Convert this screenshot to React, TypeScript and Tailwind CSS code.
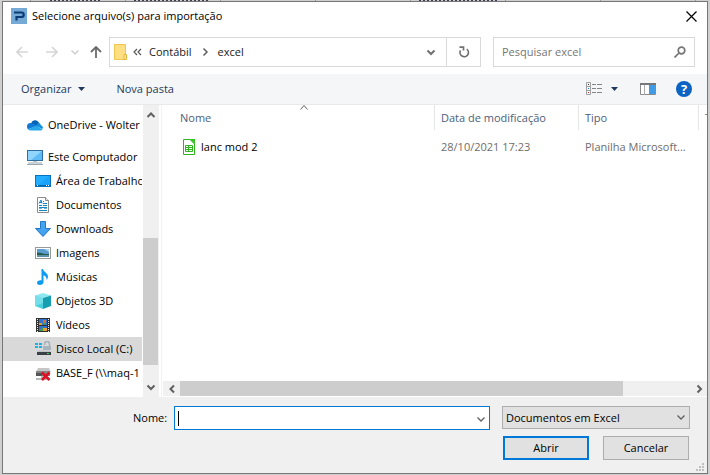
import type { ReactNode } from "react";

const TEXT = "font-['Open_Sans','Noto_Sans',sans-serif] text-[11px] leading-4";

type IconProps = { children: ReactNode };

function Icon16({ children }: IconProps) {
  return (
    <svg className="size-4 shrink-0" viewBox="0 0 16 16" aria-hidden="true">
      {children}
    </svg>
  );
}

function Chevron({ dir, color = "#606060", width = 2 }: { dir: "up" | "down" | "left" | "right"; color?: string; width?: number }) {
  const paths = {
    up: "M1.5 7 5 3.5 8.5 7",
    down: "M1.5 3.5 5 7 8.5 3.5",
    left: "M7 1.5 3.5 5 7 8.5",
    right: "M3.5 1.5 7 5 3.5 8.5",
  };
  return (
    <svg className="size-[10px] shrink-0" viewBox="0 0 10 10" fill="none" stroke={color} strokeWidth={width} aria-hidden="true">
      <path d={paths[dir]} />
    </svg>
  );
}

const icons: Record<string, ReactNode> = {
  onedrive: (
    <Icon16>
      <path d="M4 6.500a4.200 4.200 0 0 1 7.700-1.200L13 8l-6 4z" fill="#0364b8" />
      <path d="M3.600 6A3.700 3.700 0 0 0 0 9.700c0 1 .3 1.900 1 2.600L9.500 9 6 6.500A4 4 0 0 0 3.600 6z" fill="#0f78d4" />
      <path d="M9 8.800 11 6a3 3 0 0 1 3 2.300A2.900 2.900 0 0 1 16 11l-1 1z" fill="#1490df" />
      <path d="M1 12.200 9 8.600l6.500 3.800c-.5.700-1.200 1-2.300 1H3.600c-1 0-2-.4-2.600-1.200z" fill="#28a8ea" />
    </Icon16>
  ),
  computer: (
    <Icon16>
      <rect x=".5" y="1.500" width="15" height="10" fill="#5ebbf5" stroke="#2f6f9f" />
      <path d="M1 2h14L4 11H1z" fill="#8fd5fc" />
      <path d="M6 12h4v1H6z" fill="#b9c3ca" />
      <path d="M1 14h14M0 15.500h16" stroke="#98a7b1" />
    </Icon16>
  ),
  desktop: (
    <Icon16>
      <rect x=".5" y="2.500" width="15" height="11" fill="#1aa3f8" stroke="#0674bd" />
      <path d="M1 3h13L4 12H1z" fill="#22adff" />
      <path d="M1 12.500h14" stroke="#0565a8" />
      <path d="M2 12.500h1m8 0h1m1 0h1" stroke="#fff" />
    </Icon16>
  ),
  document: (
    <Icon16>
      <path d="M2.500.5h8l3 3v12h-11z" fill="#fff" stroke="#8b8b8b" />
      <path d="M10.500.5v3h3" fill="#eee" stroke="#8b8b8b" />
      <path d="M4 6.500 6 3l1 3.500M4 5.500h3M8 4.500h1M8 6.500h4M4 8.500h3M8 8.500h4M4 10.500h8M4 13.500h8" stroke="#1683c4" fill="none" />
      <path d="M4 11.500h3M9 11.500h3" stroke="#64b5e5" />
    </Icon16>
  ),
  download: (
    <Icon16>
      <path d="M5.500.5h5v7h5L8 15.500.5 7.500h5z" fill="#3797e8" stroke="#2479c6" />
      <path d="M6 1h4v7h4l-6 6-6-6h4z" fill="#45a4ef" />
    </Icon16>
  ),
  image: (
    <Icon16>
      <rect x=".5" y="2.500" width="15" height="11" fill="#fff" stroke="#999" />
      <path d="M2 4h12v8H2z" fill="#a9d5ef" />
      <path d="M2 4h7l5 3v2H2z" fill="#5a9bd0" />
      <path d="M2 7.500 6 8l4 1h4v1H2z" fill="#255d4b" />
      <path d="M2 10h12v2H2z" fill="#5c91a8" />
    </Icon16>
  ),
  music: (
    <Icon16>
      <path d="M6.500 0H8c.4 3 5 4 5 7.500 0 1.700-.8 2.800-1.500 3.500.5-3-1.500-4.300-3-4.800V13c0 1.800-1.700 3-3.600 3C3.200 16 2 15.200 2 13.800 2 12 4.200 10.800 6.500 11.300z" fill="#0f9af4" />
    </Icon16>
  ),
  cube: (
    <Icon16>
      <path d="M0 2.500 8 0l8 2.500L8 5z" fill="#8ce8f0" />
      <path d="M0 2.500 8 5v11l-8-3z" fill="#4ccfdd" />
      <path d="M16 2.500 8 5v11l8-3z" fill="#159fb0" />
      <path d="m0 2.500 8 2.500v5L0 13z" fill="#74dee9" />
    </Icon16>
  ),
  video: (
    <Icon16>
      <path d="M1 1h14v14H1z" fill="#303030" />
      <path d="M2.500 2v13M13.500 2v13" stroke="#eee" strokeDasharray="1 1" />
      <path d="M4 2h8v6H4zM4 9h8v5H4z" fill="#2f72cf" />
      <path d="M4 6h3v2H4zM8 11h4v3H8z" fill="#e9a32b" />
      <path d="M8 3h3v3H8z" fill="#df6b2c" />
      <path d="m4 14 4-4v4zM7 7l4-2v3z" fill="#4b9850" />
    </Icon16>
  ),
  drive: (
    <Icon16>
      <path d="M0 2h3v2H0zM4 2h3v2H4zM0 5h3v2H0zM4 5h3v2H4z" fill="#17b1ee" />
      <path d="M9.500 4V3A2.500 2.500 0 0 1 14.500 3v3" fill="none" stroke="#a4b1b8" strokeWidth="1.500" />
      <path d="M8 5h8v4H8z" fill="#a9b5bc" />
      <path d="M3 9.500h12l1 2H2z" fill="#bfc3c5" />
      <path d="M2 11h14v3H2z" fill="#3b4145" />
      <path d="M12 12h2v1h-2z" fill="#36db5e" />
    </Icon16>
  ),
  network: (
    <Icon16>
      <path d="M3 3h11l2 4H1z" fill="#c6c6c6" />
      <path d="M1 6h14v5H1z" fill="#858585" />
      <path d="M1 8h6v3H1z" fill="#555" />
      <path d="M6 11h3v4H6zM1 13h13v2H1z" fill="#bababa" />
      <path d="m7 7.500 7.500 7.500M14.500 7.500 7 15" stroke="#dc1020" strokeWidth="2.500" />
    </Icon16>
  ),
};

const places = [
  { name: "OneDrive - Wolter", icon: "onedrive", root: true },
  { name: "Este Computador", icon: "computer", root: true },
  { name: "Área de Trabalho", icon: "desktop" },
  { name: "Documentos", icon: "document" },
  { name: "Downloads", icon: "download" },
  { name: "Imagens", icon: "image" },
  { name: "Músicas", icon: "music" },
  { name: "Objetos 3D", icon: "cube" },
  { name: "Vídeos", icon: "video" },
  { name: "Disco Local (C:)", icon: "drive", selected: true },
  { name: "BASE_F (\\\\maq-1", icon: "network" },
];

function TitleBar() {
  return (
    <header className="flex h-7 items-center gap-[5px] pl-2 pr-[10px]">
      <svg className="size-4 shrink-0" viewBox="0 0 16 16" aria-hidden="true">
        <path d="M0 0h16v16H0z" fill="#75a9d6" />
        <path d="M3 4.500h7.500a2.200 2.200 0 0 1 0 4.500H5.500v3.500" fill="none" stroke="#0b3c78" strokeWidth="2.200" />
      </svg>
      <h1 className="flex-1 text-black">Selecione arquivo(s) para importação</h1>
      <button type="button" aria-label="Fechar" className="flex size-[11px] items-center justify-center">
        <svg className="size-[11px]" viewBox="0 0 11 11" stroke="#000" strokeWidth="1.200">
          <path d="m.5.500 10 10M10.500.500l-10 10" />
        </svg>
      </button>
    </header>
  );
}

function NavBar() {
  return (
    <nav className="flex h-[44px] items-center pl-[13px] pr-3">
      <button type="button" aria-label="Voltar">
        <svg className="h-3 w-3" viewBox="0 0 12 12" fill="none" stroke="#d6d6d6" strokeWidth="1.600">
          <path d="M12 6H1M6 1 1 6l5 5" />
        </svg>
      </button>
      <button type="button" aria-label="Avançar" className="ml-[18px]">
        <svg className="h-3 w-3" viewBox="0 0 12 12" fill="none" stroke="#d6d6d6" strokeWidth="1.600">
          <path d="M0 6h11M6 1l5 5-5 5" />
        </svg>
      </button>
      <button type="button" aria-label="Locais recentes" className="ml-3">
        <Chevron dir="down" color="#d0d0d0" width={1.500} />
      </button>
      <button type="button" aria-label="Acima" className="ml-[10px]">
        <svg className="h-3 w-3" viewBox="0 0 12 12" fill="none" stroke="#6b6b6b" strokeWidth="1.800">
          <path d="M6 12V1M1 6l5-5 5 5" />
        </svg>
      </button>
      <div className="ml-[7px] flex h-[30px] flex-1 border border-[#d9d9d9]">
        <div className="flex flex-1 items-center pl-1 text-[#1a1a1a]">
          <svg className="h-4 w-[13px]" viewBox="0 0 13 16" aria-hidden="true">
            <path d="M0 0h12v15.500H0z" fill="#ffdf82" />
            <path d="M.5.500h11v15H.5z" fill="none" stroke="#efc653" />
            <path d="M10 10.500h2.500v5H10z" fill="#ffe9a5" stroke="#e6b53a" />
          </svg>
          <svg className="ml-[6px] h-2 w-[9px]" viewBox="0 0 9 8" fill="none" stroke="#555" strokeWidth="1.200" aria-hidden="true">
            <path d="M4 1 1 4l3 3M8 1 5 4l3 3" />
          </svg>
          <a href="#contabil" className="ml-[7px]">Contábil</a>
          <span className="ml-2 flex"><Chevron dir="right" color="#606060" width={1.500} /></span>
          <a href="#excel" className="ml-2">excel</a>
        </div>
        <button type="button" aria-label="Locais anteriores" className="flex w-[30px] items-center justify-center">
          <Chevron dir="down" color="#707070" />
        </button>
        <button type="button" aria-label="Atualizar" className="flex w-[34px] items-center justify-center border-l border-[#d9d9d9]">
          <svg className="size-3" viewBox="0 0 12 12" fill="none" stroke="#707070" strokeWidth="1.700">
            <path d="M8.800 3.200A4.200 4.200 0 1 1 2.500 4.500M1.500 1.200h4v3.300" />
          </svg>
        </button>
      </div>
      <label className="ml-3 flex h-[30px] w-[202px] items-center border border-[#d9d9d9] pl-2 pr-2">
        <input type="search" aria-label="Pesquisar excel" placeholder="Pesquisar excel" className="min-w-0 flex-1 outline-none placeholder:text-[#757575]" />
        <svg className="size-3" viewBox="0 0 12 12" fill="none" stroke="#757575" strokeWidth="1.700" aria-hidden="true">
          <circle cx="7.500" cy="4.500" r="3.300" />
          <path d="M5 7 .5 11.500" />
        </svg>
      </label>
    </nav>
  );
}

function Toolbar() {
  return (
    <div className="flex h-[31px] items-center border-b border-[#e8e9eb] bg-[#f5f6f7] pl-[18px] pr-[15px] text-[#1e395b]">
      <button type="button" className="flex items-center gap-[7px]">
        Organizar
        <svg className="h-1 w-[7px]" viewBox="0 0 7 4"><path d="M0 0h7L3.500 4z" fill="#1e395b" /></svg>
      </button>
      <button type="button" className="ml-[31px]">Nova pasta</button>
      <button type="button" aria-label="Alterar exibição" className="ml-auto flex items-center gap-[9px]">
        <svg className="h-[14px] w-4" viewBox="0 0 16 14" fill="none">
          <path d="M.5.500h4v12h-4zM0 4.500h5M0 8.500h5" stroke="#a0a0a0" />
          <path d="M2 2h1v1H2z" fill="#333" /><path d="M2 6h1v1H2z" fill="#2f80d0" /><path d="M2 10h1v1H2z" fill="#c33" />
          <path d="M6 2.500h4m1 0h5M6 6.500h4m1 0h5M6 10.500h4m1 0h5" stroke="#858585" />
        </svg>
        <svg className="h-1 w-[7px]" viewBox="0 0 7 4"><path d="M0 0h7L3.500 4z" fill="#1e395b" /></svg>
      </button>
      <button type="button" aria-label="Painel de visualização" className="ml-[22px]">
        <svg className="h-3 w-4" viewBox="0 0 16 12">
          <path d="M.5.500h15v11H.5z" fill="#fff" stroke="#8a8a8a" />
          <path d="M0 0h16v2H0z" fill="#777" />
          <path d="M4.500 2v10" stroke="#aaa" />
          <path d="M9 2h6v9H9z" fill="#3f9be6" />
        </svg>
      </button>
      <button type="button" aria-label="Ajuda" className="ml-5 flex size-4 items-center justify-center rounded-full bg-[#0b63c4] text-[13px] font-bold text-white">
        ?
      </button>
    </div>
  );
}

function Sidebar() {
  return (
    <aside className="flex w-[159px] shrink-0 border-r border-[#f2f2f2]">
      <ul className="min-w-0 flex-1 overflow-hidden pt-2">
        {places.map((place) => (
          <li key={place.name} className={place.icon === "computer" ? "mt-2" : ""}>
            <a
              href={`#${place.icon}`}
              className={`flex h-6 items-center gap-[5px] whitespace-nowrap text-black ${place.root ? "pl-6" : "pl-8"} ${place.selected ? "bg-[#d9d9d9]" : ""}`}
            >
              {icons[place.icon]}
              {place.name}
            </a>
          </li>
        ))}
      </ul>
      <div className="ml-px mr-[2px] flex w-4 flex-col bg-[#f0f0f0]">
        <button type="button" aria-label="Rolar para cima" className="flex h-5 items-center justify-center"><Chevron dir="up" /></button>
        <div className="mb-3 mt-auto h-[127px] w-[15px] bg-[#cdcdcd]" />
        <button type="button" aria-label="Rolar para baixo" className="flex h-5 items-center justify-center"><Chevron dir="down" /></button>
      </div>
    </aside>
  );
}

function FileList() {
  return (
    <main className="flex min-w-0 flex-1 flex-col">
      <div className="flex-1 overflow-hidden">
        <table className="w-[640px] table-fixed border-separate border-spacing-0 text-left">
          <colgroup>
            <col className="w-[273px]" />
            <col className="w-[144px]" />
            <col className="w-[120px]" />
            <col />
          </colgroup>
          <thead className="text-[#4c607a]">
            <tr className="h-[25px]">
              <th scope="col" className="relative border-r border-[#e5e5e5] pl-[18px] font-normal">
                Nome
                <svg className="absolute right-[126px] top-0 h-[5px] w-2" viewBox="0 0 8 5" fill="none" stroke="#606060" aria-hidden="true">
                  <path d="m.5 4.500 3.500-4 3.500 4" />
                </svg>
              </th>
              <th scope="col" className="border-r border-[#e5e5e5] pl-[6px] font-normal">Data de modificação</th>
              <th scope="col" className="border-r border-[#e5e5e5] pl-[6px] font-normal">Tipo</th>
              <th scope="col" className="pl-[6px] font-normal">Tamanho</th>
            </tr>
          </thead>
          <tbody className="text-[#6d6d6d]">
            <tr className="h-[34px]">
              <td className="pl-[21px] text-black">
                <span className="flex items-center gap-[6px]">
                  <svg className="h-4 w-3" viewBox="0 0 12 16" aria-hidden="true">
                    <path d="M.5.500H7L11.500 5v10.500H.5z" fill="#fff" stroke="#2eb520" />
                    <path d="M6.500 0H12v5.500z" fill="#37c526" />
                    <path d="M2.500 6.500h7v6h-7zM2.500 8.500h7M2.500 10.500h7M5.500 6.500v6" fill="none" stroke="#2eb520" />
                  </svg>
                  lanc mod 2
                </span>
              </td>
              <td className="pl-[6px]">28/10/2021 17:23</td>
              <td className="whitespace-nowrap pl-[6px]">Planilha Microsoft...</td>
              <td />
            </tr>
          </tbody>
        </table>
      </div>
      <div className="mb-px ml-px flex h-[15px] items-center bg-[#f0f0f0]">
        <button type="button" aria-label="Rolar para a esquerda" className="flex w-[17px] justify-center"><Chevron dir="left" /></button>
        <div className="mr-[67px] h-full flex-1 bg-[#cdcdcd]" />
        <button type="button" aria-label="Rolar para a direita" className="flex w-[17px] justify-center"><Chevron dir="right" /></button>
      </div>
    </main>
  );
}

function Footer() {
  return (
    <footer className="relative bg-[#f0f0f0] pb-[13px] pl-[130px] pr-[17px] pt-[9px] text-black">
      <div className="flex items-start">
        <label htmlFor="filename" className="w-[41px] leading-6">Nome:</label>
        <div className="relative flex-1">
          <input id="filename" type="text" className="block h-6 w-full border border-[#0078d7] bg-white pl-1 pr-5 outline-none" />
          <span className="absolute left-1 top-[5px] h-[15px] w-px bg-black" />
          <span className="absolute right-1 top-2"><Chevron dir="down" width={1.300} /></span>
        </div>
        <div className="relative ml-3 w-[188px]">
          <select aria-label="Tipo de arquivo" className="block h-[23px] w-full appearance-none border border-[#adadad] bg-[#e1e1e1] pl-[3px]">
            <option>Documentos em Excel</option>
          </select>
          <span className="pointer-events-none absolute right-1 top-[6px]"><Chevron dir="down" width={1.300} /></span>
        </div>
      </div>
      <div className="mt-[6px] flex justify-end gap-[14px] pr-px">
        <button type="button" className="h-6 w-[86px] border-2 border-[#0078d7] bg-[#e1e1e1]">Abrir</button>
        <button type="button" className="h-6 w-[86px] border border-[#adadad] bg-[#e1e1e1]">Cancelar</button>
      </div>
      <svg className="absolute bottom-[2px] right-[3px] size-2" viewBox="0 0 8 8" fill="#bfbfbf" aria-hidden="true">
        <path d="M6 0h2v2H6zM6 3h2v2H6zM6 6h2v2H6zM3 3h2v2H3zM3 6h2v2H3zM0 6h2v2H0z" />
      </svg>
    </footer>
  );
}

function Backdrop() {
  return (
    <svg className="h-px w-[710px] shrink-0" viewBox="0 0 710 1" aria-hidden="true">
      <path d="M30 .5h1M125 .5h1M220 .5h1M315 .5h1M410 .5h1M505 .5h1M600 .5h1M695 .5h1" stroke="#999" />
      <path d="M50 .5h52M134 .5h76M419 .5h80" stroke="#3c3c50" strokeDasharray="2 2" />
    </svg>
  );
}

export default function App() {
  return (
    <div className={`flex h-screen flex-col overflow-hidden bg-[#cfcfcf] pb-px ${TEXT}`}>
      <Backdrop />
      <section role="dialog" aria-label="Selecione arquivo(s) para importação" className="mx-[2px] flex min-h-0 flex-1 flex-col border border-[#777] bg-white">
        <TitleBar />
        <NavBar />
        <Toolbar />
        <div className="flex min-h-0 flex-1">
          <Sidebar />
          <FileList />
        </div>
        <Footer />
      </section>
    </div>
  );
}
